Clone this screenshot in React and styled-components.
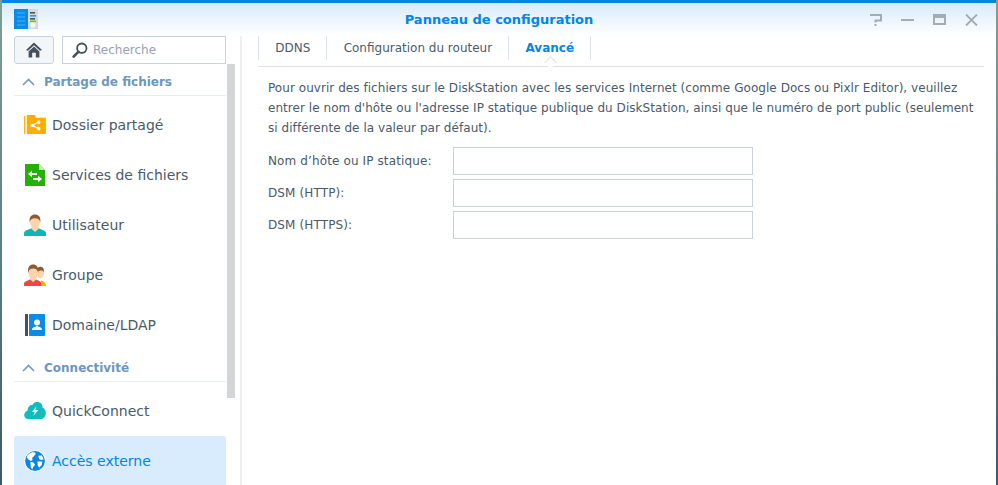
import { styled, createGlobalStyle } from "styled-components";

const GlobalStyle = createGlobalStyle`
  html, body {
    margin: 0;
    height: 100%;
    overflow: hidden;
    background: linear-gradient(180deg, #7f9f92 0%, #5d8088 50%, #3c5a68 100%);
  }
  body {
    font-family: "DejaVu Sans", "Liberation Sans", sans-serif;
  }
  * {
    box-sizing: border-box;
  }
`;

function AppLogo() {
  return (
    <svg width="24" height="21" viewBox="0 0 24 21">
      <rect x="0" y="0" width="24" height="20" fill="#d5d9dc" />
      <rect x="0" y="0" width="14" height="20" fill="#0a8be8" />
      <path d="M3 4h8M3 8h8M3 12h8M3 16h8" stroke="#4fb2f2" strokeWidth="1" />
      <rect x="16" y="3" width="5" height="1.6" fill="#4a5561" />
      <rect x="16" y="6" width="6" height="1.6" fill="#1fa5dd" />
      <rect x="16" y="9" width="5" height="1.6" fill="#4a5561" />
      <rect x="16" y="11.5" width="6" height="1.6" fill="#7cc41f" />
      <circle cx="19" cy="16" r="2.6" fill="#f4f6f7" />
    </svg>
  );
}

function HomeIcon() {
  return (
    <svg width="16" height="16" viewBox="0 0 16 16">
      <path d="M8 0.5 L16 8 L14 8.8 L8 3.2 L2 8.8 L0 8 Z" fill="#46505c" />
      <path d="M2.6 9.4 L8 4.6 L13.4 9.4 V15.5 H9.8 V10.8 H6.2 V15.5 H2.6 Z" fill="#46505c" />
    </svg>
  );
}

function SearchIcon() {
  return (
    <svg width="16" height="16" viewBox="0 0 16 16">
      <circle cx="9.8" cy="6.2" r="4.7" fill="none" stroke="#46505c" strokeWidth="1.8" />
      <path d="M6.3 9.8 L1.6 14.6" stroke="#46505c" strokeWidth="2.6" strokeLinecap="round" />
    </svg>
  );
}

function Chevron() {
  return (
    <svg width="13" height="8" viewBox="0 0 13 8">
      <path d="M1 7 L6.5 1.5 L12 7" fill="none" stroke="#7b9cb9" strokeWidth="1.7" />
    </svg>
  );
}

function FolderIcon() {
  return (
    <svg width="22" height="20" viewBox="0 0 24 22">
      <rect x="0" y="1" width="1.4" height="20" fill="#ffae00" />
      <path d="M3 21 V0 H12 L13 3 H24 V21 Z" fill="#ffae00" />
      <path d="M9 11.5 L16 7.8 M9 11.5 L16 15" stroke="#fff" strokeWidth="1.3" />
      <circle cx="9" cy="11.5" r="2" fill="#fff" />
      <circle cx="16" cy="7.8" r="2" fill="#fff" />
      <circle cx="16" cy="15" r="2" fill="#fff" />
    </svg>
  );
}

function FileServiceIcon() {
  return (
    <svg width="22" height="22" viewBox="0 0 22 22">
      <path d="M1 0 H15 L21 6 V22 H1 Z" fill="#21b204" />
      <path d="M15 0 L21 6 H15 Z" fill="#c9edc0" />
      <path d="M4 10 L8 6.8 V8.9 H13 V11.1 H8 V13.2 Z" fill="#fff" />
      <path d="M18 15 L14 11.8 V13.9 H9 V16.1 H14 V18.2 Z" fill="#fff" />
    </svg>
  );
}

function UserIcon() {
  return (
    <svg width="22" height="22" viewBox="0 0 24 24">
      <path d="M0 24 V21 C0 18 5 17 8 15.5 L12 18 L16 15.5 C19 17 24 18 24 21 V24 Z" fill="#12b5b5" />
      <path d="M8 14 H16 V16 L12 19.5 L8 16 Z" fill="#fcd3aa" />
      <ellipse cx="12" cy="8.5" rx="5.4" ry="7.2" fill="#fcd3aa" />
      <path d="M6.2 9 C5.4 2.5 8.5 0.5 12 0.5 C15.5 0.5 18.6 2.5 17.8 9 C17 6 15.5 4.6 12 4.6 C8.5 4.6 7 6 6.2 9 Z" fill="#8a5a33" />
    </svg>
  );
}

function GroupIcon() {
  return (
    <svg width="22" height="22" viewBox="0 0 24 24">
      <path d="M15 24 L19 18 C21 19 24 20 24 24 Z" fill="#ffae00" />
      <ellipse cx="18" cy="10" rx="3.8" ry="5.6" fill="#fcd3aa" />
      <path d="M14 8 C14 4 16 3 18 3 C20.5 3 22 5 21.8 9 C20.5 6.5 18 6.5 14 8 Z" fill="#8a5a33" />
      <path d="M15 17 L20 23 H16 Z" fill="#fcd3aa" />
      <path d="M0 24 V21.5 C0 19 4 18 7 16.5 L10 19 L13 16.5 C15.5 18 19 19 19 21.5 V24 Z" fill="#ee4646" />
      <path d="M7 15 H13 V17 L10 20 L7 17 Z" fill="#fcd3aa" />
      <ellipse cx="10" cy="9.5" rx="5.2" ry="7.4" fill="#fcd3aa" />
      <path d="M4.4 10 C3.6 3 6.6 0.5 10 0.5 C13.4 0.5 16.4 3 15.6 10 C14.8 6.5 13.4 5 10 5 C6.6 5 5.2 6.5 4.4 10 Z" fill="#8a5a33" />
    </svg>
  );
}

function DomainIcon() {
  return (
    <svg width="22" height="22" viewBox="-1 0 22 22">
      <rect x="0" y="0" width="3" height="22" fill="#46505c" />
      <rect x="4" y="0" width="16" height="22" rx="1" fill="#0a8be8" />
      <circle cx="12" cy="8.4" r="3" fill="#fff" />
      <path d="M7 16 C7 13 10 13 12 12 C14 13 17 13 17 16 Z" fill="#fff" />
    </svg>
  );
}

function CloudIcon() {
  return (
    <svg width="22" height="18" viewBox="0 0 24 20">
      <path
        d="M5 19 C1.5 19 0 16.5 0 14.5 C0 12 1.8 10.2 3.8 9.8 C3.6 5 7 3 9 3.4 C10.5 0.5 13 0 14.5 0 C18 0 20.5 2.6 20.3 6 C22.5 7 24 9 24 12.5 C24 16.5 21 19 18 19 Z"
        fill="#0fbdbd"
      />
      <path d="M13.8 4.8 L8.6 11 H11.8 L10 15.6 L15.6 9 H12.2 Z" fill="#fff" />
    </svg>
  );
}

function GlobeIcon() {
  return (
    <svg width="22" height="22" viewBox="0 0 24 24">
      <circle cx="12" cy="12" r="11.8" fill="#fff" />
      <circle cx="12" cy="12" r="10.8" fill="#0a86e0" />
      <path d="M9 2.4 C6.5 3 4 5 3 7.6 L4.4 10.2 L7.4 12 L9.4 11 L8.8 8.6 L11 6.6 L13 4 L11.6 2.4 Z" fill="#fff" />
      <path d="M7 13 L10.6 13.6 L12 16 L10 18.6 L9 21.4 L7.4 19 Z" fill="#fff" />
      <path d="M15.6 6.4 L19.6 6 L21.4 10 L19 11 L16.6 10 Z M14.6 12.6 L20 12.6 L19.4 16.4 L16.4 19.4 L15 16.6 Z" fill="#fff" />
    </svg>
  );
}

function HelpIcon() {
  return (
    <svg width="13" height="12" viewBox="0 0 13 12">
      <path d="M1 1 H12 V6.5 H6.5 V8.4" fill="none" stroke="#a3abb3" strokeWidth="2" />
      <rect x="5.5" y="10" width="2" height="2" fill="#a3abb3" />
    </svg>
  );
}

function MinimizeIcon() {
  return (
    <svg width="13" height="12" viewBox="0 0 13 12">
      <rect x="0" y="5" width="13" height="2" fill="#a3abb3" />
    </svg>
  );
}

function MaximizeIcon() {
  return (
    <svg width="13" height="11" viewBox="0 0 13 11">
      <path d="M0 0 H13 V11 H0 Z M2 4 V9 H11 V4 Z" fillRule="evenodd" fill="#a3abb3" />
    </svg>
  );
}

function CloseIcon() {
  return (
    <svg width="13" height="12" viewBox="0 0 13 12">
      <path d="M1 0.5 L12 11.5 M12 0.5 L1 11.5" stroke="#a3abb3" strokeWidth="1.9" />
    </svg>
  );
}

const fileItems = [
  { label: "Dossier partagé", icon: <FolderIcon /> },
  { label: "Services de fichiers", icon: <FileServiceIcon /> },
  { label: "Utilisateur", icon: <UserIcon /> },
  { label: "Groupe", icon: <GroupIcon /> },
  { label: "Domaine/LDAP", icon: <DomainIcon /> },
];

const connectItems = [
  { label: "QuickConnect", icon: <CloudIcon /> },
  { label: "Accès externe", icon: <GlobeIcon />, active: true },
];

const fields = ["Nom d’hôte ou IP statique:", "DSM (HTTP):", "DSM (HTTPS):"];

function NavGroup({ title, items }) {
  return (
    <>
      <SectionHead>
        <Chevron />
        <span>{title}</span>
      </SectionHead>
      <NavList>
        {items.map(item => (
          <NavItem key={item.label} $active={item.active}>
            <NavIcon>{item.icon}</NavIcon>
            {item.label}
          </NavItem>
        ))}
      </NavList>
    </>
  );
}

export default function App() {
  return (
    <Window>
      <GlobalStyle />
      <TitleBar>
        <LogoSlot>
          <AppLogo />
        </LogoSlot>
        <Title>Panneau de configuration</Title>
        <Controls>
          <HelpIcon />
          <MinimizeIcon />
          <MaximizeIcon />
          <CloseIcon />
        </Controls>
      </TitleBar>
      <Body>
        <Sidebar>
          <Toolbar>
            <HomeButton>
              <HomeIcon />
            </HomeButton>
            <SearchBox>
              <SearchIcon />
              <span>Recherche</span>
            </SearchBox>
          </Toolbar>
          <NavGroup title="Partage de fichiers" items={fileItems} />
          <NavGroup title="Connectivité" items={connectItems} />
          <ScrollThumb />
        </Sidebar>
        <Main>
          <Tabs>
            <Tab>DDNS</Tab>
            <Tab>Configuration du routeur</Tab>
            <Tab $active>Avancé</Tab>
          </Tabs>
          <Description>
            Pour ouvrir des fichiers sur le DiskStation avec les services
            Internet (comme Google Docs ou Pixlr Editor), veuillez entrer le nom
            d'hôte ou l'adresse IP statique publique du DiskStation, ainsi que
            le numéro de port public (seulement si différente de la valeur par
            défaut).
          </Description>
          <Form>
            {fields.map(field => (
              <Row key={field}>
                <label>{field}</label>
                <Input />
              </Row>
            ))}
          </Form>
        </Main>
      </Body>
    </Window>
  );
}

const Window = styled.div`
  margin: 0 2px;
  height: 485px;
  background: #fff;
  display: flex;
  flex-direction: column;
  overflow: hidden;
`;
const TitleBar = styled.header`
  flex: none;
  height: 36px;
  border-top: 3px solid #0086e5;
  background: linear-gradient(180deg, #d8ebfb 0%, #ffffff 100%);
  display: grid;
  grid-template-columns: 1fr auto 1fr;
  align-items: center;
`;
const LogoSlot = styled.div`
  padding-left: 12px;
  display: flex;
`;
const Title = styled.h1`
  margin: 0;
  font-size: 13px;
  font-weight: 700;
  color: #0086e5;
`;
const Controls = styled.div`
  display: flex;
  justify-content: flex-end;
  align-items: center;
  gap: 19px;
  padding-right: 18px;
`;
const Body = styled.div`
  flex: 1;
  min-height: 0;
  display: flex;
`;
const Sidebar = styled.aside`
  position: relative;
  flex: none;
  width: 240px;
  padding-left: 12px;
  padding-right: 14px;
  border-right: 2px solid #eef0f2;
`;
const Toolbar = styled.div`
  height: 28px;
  display: flex;
  gap: 8px;
`;
const HomeButton = styled.div`
  width: 40px;
  border: 1px solid #c8d2dc;
  border-radius: 3px;
  background: #f3f6f9;
  display: flex;
  align-items: center;
  justify-content: center;
`;
const SearchBox = styled.div`
  flex: 1;
  border: 1px solid #c8d2dc;
  display: flex;
  align-items: center;
  gap: 5px;
  padding-left: 9px;
  font-size: 12px;
  color: #97a2ad;
`;
const SectionHead = styled.div`
  height: 32px;
  border-bottom: 1px solid #e8eef4;
  display: flex;
  align-items: center;
  gap: 9px;
  padding: 4px 0 0 8px;
  font-size: 12px;
  font-weight: 700;
  color: #6d97bc;
`;
const NavList = styled.ul`
  list-style: none;
  margin: 4px 0 0;
  padding: 0;
`;
const NavItem = styled.li`
  height: 50px;
  display: flex;
  align-items: center;
  gap: 5px;
  padding-left: 9px;
  border-radius: 3px;
  font-size: 14px;
  color: ${p => (p.$active ? "#0086e5" : "#4a5a6b")};
  background: ${p => (p.$active ? "#d9ecfd" : "transparent")};
`;
const NavIcon = styled.span`
  width: 24px;
  height: 24px;
  flex: none;
  display: flex;
  align-items: center;
  justify-content: center;
`;
const ScrollThumb = styled.div`
  position: absolute;
  top: 28px;
  left: 225px;
  width: 8px;
  height: 334px;
  background: #d3d5d7;
`;
const Main = styled.main`
  flex: 1;
  min-width: 0;
  padding: 0 12px 0 16px;
`;
const Tabs = styled.nav`
  height: 31px;
  border-bottom: 1px solid #dde1e5;
  display: flex;
  align-items: flex-start;
`;
const Tab = styled.div`
  position: relative;
  height: 24px;
  padding: 0 16.2px;
  border-left: 1px solid #dce3ea;
  display: flex;
  align-items: center;
  font-size: 12px;
  font-weight: ${p => (p.$active ? 700 : 400)};
  color: ${p => (p.$active ? "#0086e5" : "#4a5a6b")};

  ${p =>
    p.$active &&
    `
    border-right: 1px solid #dce3ea;
    &::after {
      content: "";
      position: absolute;
      left: 50%;
      bottom: -7px;
      width: 8px;
      height: 8px;
      margin-left: -4px;
      background: #fff;
      border-left: 1px solid #dde1e5;
      border-top: 1px solid #dde1e5;
      transform: rotate(45deg);
    }
  `}
`;
const Description = styled.p`
  margin: 11px 0 0;
  padding: 0 6px 0 10px;
  font-size: 12px;
  line-height: 20px;
  letter-spacing: 0.05px;
  color: #4a5a6b;
`;
const Form = styled.form`
  margin-top: 9px;
  padding-left: 10px;
  display: flex;
  flex-direction: column;
  gap: 4px;
`;
const Row = styled.div`
  display: grid;
  grid-template-columns: 185px 300px;
  align-items: center;
  font-size: 12px;
  letter-spacing: 0.12px;
  color: #4a5a6b;
`;
const Input = styled.input`
  height: 28px;
  border: 1px solid #c8d2dc;
  background: #fff;
  outline: none;
`;
